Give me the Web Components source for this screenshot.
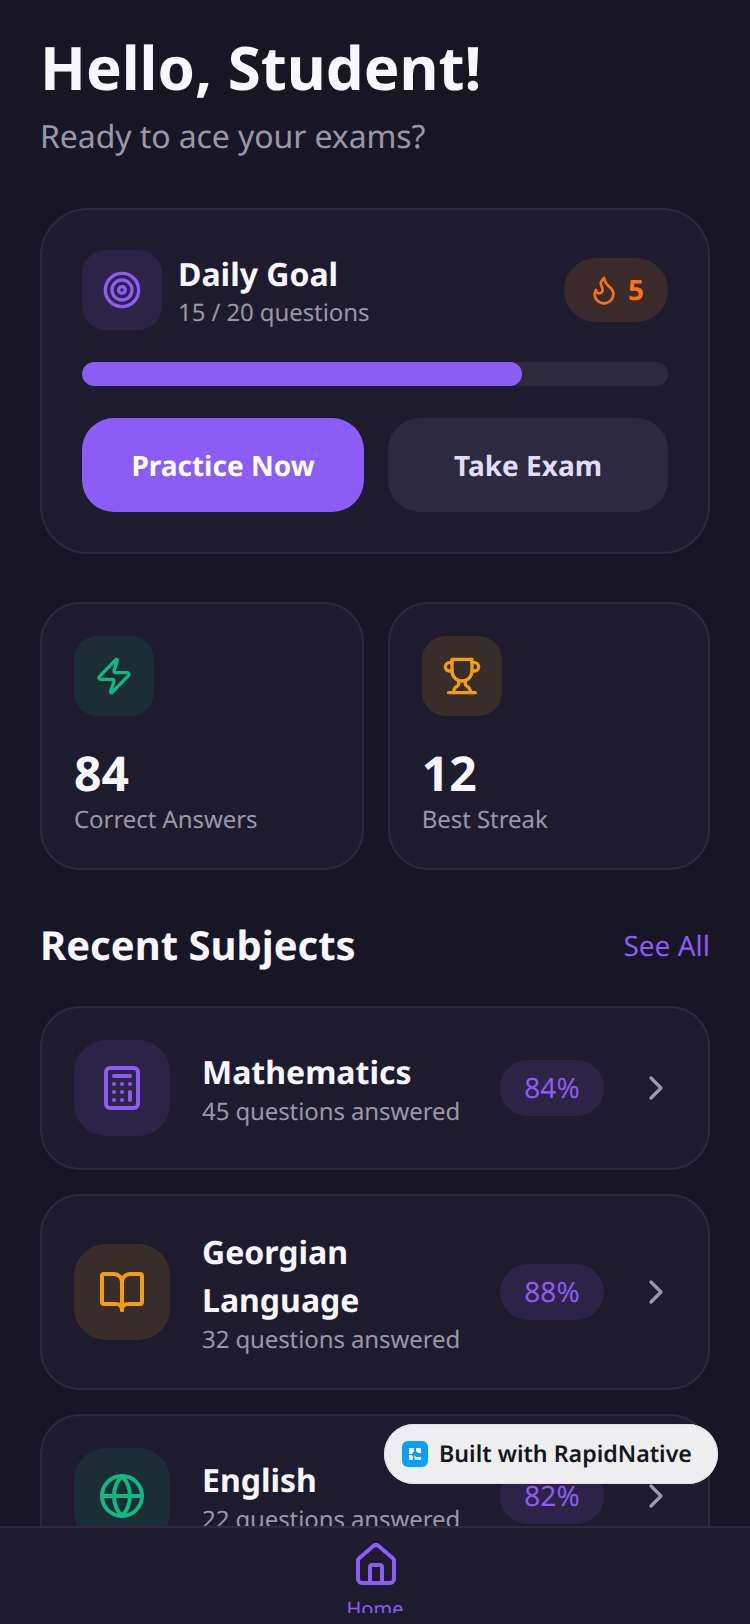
<!DOCTYPE html>
<html lang="en">
<head>
<meta charset="utf-8">
<title>Hello, Student</title>
<style>
  html, body { margin: 0; height: 100%; background: #181624; }
  body { font-family: "Noto Sans", "Open Sans", sans-serif; overflow: hidden; text-rendering: geometricPrecision; }
</style>
</head>
<body>
<app-shell>
  <page-header title="Hello, Student!" subtitle="Ready to ace your exams?"></page-header>
  <goal-card done="15" total="20" streak="5"></goal-card>
  <div style="display:flex;gap:24px;margin-top:48px">
    <stat-card icon="zap" tone="green" value="84" label="Correct Answers" style="flex:323"></stat-card>
    <stat-card icon="trophy" tone="amber" value="12" label="Best Streak" style="flex:321"></stat-card>
  </div>
  <section-head title="Recent Subjects" action="See All"></section-head>
  <subject-row icon="calculator" tone="purple" name="Mathematics" info="45 questions answered" score="84%"></subject-row>
  <subject-row icon="book" tone="amber" name="Georgian Language" info="32 questions answered" score="88%"></subject-row>
  <subject-row icon="globe" tone="green" name="English" info="22 questions answered" score="82%"></subject-row>
</app-shell>

<script>
// lucide shapes, all on a 24 grid
const ICONS = {
  target: '<circle cx="12" cy="12" r="10"/><circle cx="12" cy="12" r="6"/><circle cx="12" cy="12" r="2"/>',
  flame: '<path d="M8.5 14.5A2.5 2.5 0 0 0 11 12c0-1.38-.5-2-1-3-1.072-2.143-.224-4.054 2-6 .5 2.5 2 4.9 4 6.5 2 1.6 3 3.5 3 5.5a7 7 0 1 1-14 0c0-1.153.433-2.294 1-3a2.5 2.5 0 0 0 2.5 2.5z"/>',
  zap: '<path d="M4 14a1 1 0 0 1-.78-1.63l9.9-10.2a.5.5 0 0 1 .86.46l-1.92 6.02A1 1 0 0 0 13 10h7a1 1 0 0 1 .78 1.63l-9.9 10.2a.5.5 0 0 1-.86-.46l1.92-6.02A1 1 0 0 0 11 14z"/>',
  trophy: '<path d="M6 9H4.5a2.5 2.5 0 0 1 0-5H6"/><path d="M18 9h1.5a2.5 2.5 0 0 0 0-5H18"/><path d="M4 22h16"/><path d="M10 14.66V17c0 .55-.47.98-.97 1.21C7.85 18.75 7 20.24 7 22"/><path d="M14 14.66V17c0 .55.47.98.97 1.21C16.15 18.75 17 20.24 17 22"/><path d="M18 2H6v7a6 6 0 0 0 12 0V2Z"/>',
  calculator: '<rect width="16" height="20" x="4" y="2" rx="2"/><line x1="8" x2="16" y1="6" y2="6"/><line x1="16" x2="16" y1="14" y2="18"/><path d="M16 10h.01"/><path d="M12 10h.01"/><path d="M8 10h.01"/><path d="M12 14h.01"/><path d="M8 14h.01"/><path d="M12 18h.01"/><path d="M8 18h.01"/>',
  book: '<path d="M12 7v14"/><path d="M3 18a1 1 0 0 1-1-1V4a1 1 0 0 1 1-1h5a4 4 0 0 1 4 4 4 4 0 0 1 4-4h5a1 1 0 0 1 1 1v13a1 1 0 0 1-1 1h-6a3 3 0 0 0-3 3 3 3 0 0 0-3-3z"/>',
  globe: '<circle cx="12" cy="12" r="10"/><path d="M12 2a14.5 14.5 0 0 0 0 20 14.5 14.5 0 0 0 0-20"/><path d="M2 12h20"/>',
  house: '<path d="M15 21v-8a1 1 0 0 0-1-1h-4a1 1 0 0 0-1 1v8"/><path d="M3 10a2 2 0 0 1 .709-1.528l7-5.999a2 2 0 0 1 2.582 0l7 5.999A2 2 0 0 1 21 10v9a2 2 0 0 1-2 2H5a2 2 0 0 1-2-2z"/>',
  chevron: '<path d="m9 18 6-6-6-6"/>'
};

const TONES = {
  purple: { fg: '#8b5cf6', bg: '#2d2347' },
  amber: { fg: '#f59e0b', bg: '#392d2a' },
  green: { fg: '#10b981', bg: '#1e2d35' }
};

class UiIcon extends HTMLElement {
  connectedCallback() {
    const size = this.getAttribute('size') || 40;
    const color = this.getAttribute('color') || 'currentColor';
    this.attachShadow({mode: 'open'}).innerHTML = `
      <style>:host { display: block; width: ${size}px; height: ${size}px; } svg { display: block; }</style>
      <svg width="${size}" height="${size}" viewBox="0 0 24 24" fill="none" stroke="${color}" stroke-width="2" stroke-linecap="round" stroke-linejoin="round">${ICONS[this.getAttribute('name')]}</svg>`;
  }
}

// rounded square behind an icon
class IconTile extends HTMLElement {
  connectedCallback() {
    const tone = TONES[this.getAttribute('tone')];
    const box = this.getAttribute('box') || 80;
    const size = this.getAttribute('size') || 40;
    const radius = this.getAttribute('radius') || 24;
    this.attachShadow({mode: 'open'}).innerHTML = `
      <style>
        :host { display: flex; flex: none; align-items: center; justify-content: center;
          width: ${box}px; height: ${box}px; border-radius: ${radius}px; background: ${tone.bg}; }
      </style>
      <ui-icon name="${this.getAttribute('icon')}" size="${size}" color="${tone.fg}"></ui-icon>`;
  }
}

class AppShell extends HTMLElement {
  constructor() {
    super();
    this.attachShadow({mode: 'open'}).innerHTML = `
      <style>
        :host { display: flex; flex-direction: column; height: 1624px; position: relative; overflow: hidden; }
        .scroll { flex: 1; min-height: 0; overflow: hidden; padding: 31px 40px 0; }
      </style>
      <div class="scroll"><slot></slot></div>
      <tab-bar></tab-bar>
      <built-badge></built-badge>`;
  }
}

class PageHeader extends HTMLElement {
  connectedCallback() {
    this.attachShadow({mode: 'open'}).innerHTML = `
      <style>
        :host { display: block; margin-bottom: 47px; }
        h1 { margin: 0; font-size: 60px; line-height: 72px; font-weight: 700; color: #f8f7ff; }
        p { margin: 10px 0 0; font-size: 32px; line-height: 48px; letter-spacing: -0.09px; color: #9a98a8; }
      </style>
      <h1>${this.getAttribute('title')}</h1>
      <p>${this.getAttribute('subtitle')}</p>`;
  }
}

class GoalCard extends HTMLElement {
  connectedCallback() {
    const done = +this.getAttribute('done');
    const total = +this.getAttribute('total');
    this.attachShadow({mode: 'open'}).innerHTML = `
      <style>
        :host { display: block; padding: 40px; background: #1e1b2e; border: 2px solid #2d2a3e; border-radius: 48px; }
        .top { display: flex; align-items: center; gap: 16px; }
        .info { flex: 1; min-width: 0; padding-top: 2px; }
        .name { font-size: 32px; line-height: 44px; font-weight: 700; color: #f8f7ff; }
        .sub { font-size: 24px; line-height: 32px; letter-spacing: -0.09px; color: #9a98a8; }
        .streak { display: flex; align-items: center; gap: 8px; height: 64px; padding: 0 24px; border-radius: 32px; background: #3a2a2c;
          font-size: 28px; font-weight: 700; color: #f97316; }
        .track { height: 24px; margin-top: 32px; border-radius: 12px; background: #2d2a3e; overflow: hidden; }
        .fill { height: 100%; border-radius: 12px; background: #8b5cf6; }
        .actions { display: flex; gap: 24px; margin-top: 32px; }
        .btn { display: flex; align-items: center; justify-content: center; height: 94px; box-sizing: border-box; padding-top: 2px;
          border-radius: 32px; font-size: 28px; font-weight: 700; }
        .primary { flex: 282; background: #8b5cf6; color: #fff; }
        .secondary { flex: 280; background: #2d2940; color: #e2dcfb; }
      </style>
      <div class="top">
        <icon-tile icon="target" tone="purple"></icon-tile>
        <div class="info">
          <div class="name">Daily Goal</div>
          <div class="sub">${done} / ${total} questions</div>
        </div>
        <div class="streak"><ui-icon name="flame" size="32" color="#f97316"></ui-icon>${this.getAttribute('streak')}</div>
      </div>
      <div class="track"><div class="fill" style="width:${done / total * 100}%"></div></div>
      <div class="actions">
        <div class="btn primary">Practice Now</div>
        <div class="btn secondary">Take Exam</div>
      </div>`;
  }
}

class StatCard extends HTMLElement {
  connectedCallback() {
    this.attachShadow({mode: 'open'}).innerHTML = `
      <style>
        :host { display: block; box-sizing: border-box; padding: 32px; background: #1e1b2e; border: 2px solid #2d2a3e; border-radius: 40px; }
        .value { margin-top: 28px; font-size: 48px; line-height: 60px; font-weight: 700; color: #f8f7ff; }
        .label { font-size: 24px; line-height: 32px; letter-spacing: -0.07px; color: #9a98a8; }
      </style>
      <icon-tile icon="${this.getAttribute('icon')}" tone="${this.getAttribute('tone')}"></icon-tile>
      <div class="value">${this.getAttribute('value')}</div>
      <div class="label">${this.getAttribute('label')}</div>`;
  }
}

class SectionHead extends HTMLElement {
  connectedCallback() {
    this.attachShadow({mode: 'open'}).innerHTML = `
      <style>
        :host { display: flex; align-items: center; justify-content: space-between; margin: 47px 0 33px; }
        h2 { margin: 0; font-size: 40px; line-height: 56px; font-weight: 700; color: #f8f7ff; }
        span { padding-top: 2px; font-size: 28px; color: #8b5cf6; }
      </style>
      <h2>${this.getAttribute('title')}</h2>
      <span>${this.getAttribute('action')}</span>`;
  }
}

class SubjectRow extends HTMLElement {
  connectedCallback() {
    this.attachShadow({mode: 'open'}).innerHTML = `
      <style>
        :host { display: flex; align-items: center; gap: 32px; padding: 32px; margin-bottom: 24px;
          background: #1e1b2e; border: 2px solid #2d2a3e; border-radius: 40px; }
        .text { flex: 1; min-width: 0; padding-top: 1px; }
        .name { font-size: 32px; line-height: 48px; font-weight: 700; color: #f8f7ff; }
        .info { margin-top: -1px; font-size: 24px; line-height: 32px; letter-spacing: -0.1px; color: #9a98a8; white-space: nowrap; }
        .score { flex: none; display: flex; align-items: center; justify-content: center; width: 104px; height: 56px; margin-right: 2px;
          border-radius: 28px; background: #2d2347; font-size: 28px; color: #8b5cf6; }
        ui-icon { flex: none; margin-left: -2px; }
      </style>
      <icon-tile icon="${this.getAttribute('icon')}" tone="${this.getAttribute('tone')}" box="96" size="48" radius="32"></icon-tile>
      <div class="text">
        <div class="name">${this.getAttribute('name')}</div>
        <div class="info">${this.getAttribute('info')}</div>
      </div>
      <div class="score">${this.getAttribute('score')}</div>
      <ui-icon name="chevron" size="40" color="#9a98a8"></ui-icon>`;
  }
}

class TabBar extends HTMLElement {
  connectedCallback() {
    this.attachShadow({mode: 'open'}).innerHTML = `
      <style>
        :host { display: flex; flex-direction: column; align-items: center; flex: none; height: 98px; box-sizing: border-box;
          padding-top: 13px; background: #1e1b2e; border-top: 2px solid #2d2a3e; position: relative; z-index: 1; }
        ui-icon { margin-left: 2px; }
        .label { margin-top: 5px; height: 19px; overflow: hidden; font-size: 20px; line-height: 30px; color: #8b5cf6; }
      </style>
      <ui-icon name="house" size="48" color="#8b5cf6"></ui-icon>
      <div class="label">Home</div>`;
  }
}

// floats over the list, bottom right
class BuiltBadge extends HTMLElement {
  connectedCallback() {
    this.attachShadow({mode: 'open'}).innerHTML = `
      <style>
        :host { position: absolute; z-index: 2; left: 384px; top: 1424px; display: flex; align-items: center; gap: 11px;
          width: 334px; height: 60px; box-sizing: border-box; padding-left: 18px; border-radius: 30px;
          background: #eeeef1; font-size: 23.2px; font-weight: 600; color: #15151c; box-shadow: 0 0 0 1px #e0e0e5 inset; }
        svg { display: block; flex: none; }
        span { position: relative; top: -1px; }
      </style>
      <svg width="26" height="26" viewBox="0 0 26 26">
        <rect width="26" height="26" rx="6" fill="#0a9eff"/>
        <path d="M7 7h5v3l-2 3H7zM14 7h5v5h-3l-2-2zM12 14l2 2h5v3h-6zM7 14h3l1 2v3H7z" fill="#fff"/>
      </svg>
      <span>Built with RapidNative</span>`;
  }
}

customElements.define('ui-icon', UiIcon);
customElements.define('icon-tile', IconTile);
customElements.define('app-shell', AppShell);
customElements.define('page-header', PageHeader);
customElements.define('goal-card', GoalCard);
customElements.define('stat-card', StatCard);
customElements.define('section-head', SectionHead);
customElements.define('subject-row', SubjectRow);
customElements.define('tab-bar', TabBar);
customElements.define('built-badge', BuiltBadge);
</script>
</body>
</html>
